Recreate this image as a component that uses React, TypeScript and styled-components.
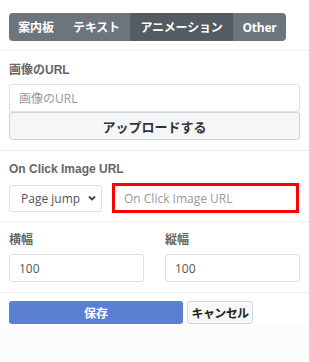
import React from "react";
import styled, { createGlobalStyle } from "styled-components";

const Global = createGlobalStyle`
  html, body { margin: 0; padding: 0; background: #fff; }
  body { font-family: "Open Sans", "Noto Sans CJK JP", sans-serif; }
  * { box-sizing: border-box; }
`;

const Panel = styled.div`
  width: 309px;
  display: flex;
  flex-direction: column;
`;

const Section = styled.div<{ $pt?: number; $pb?: number }>`
  padding: ${(p) => p.$pt ?? 12}px 9px ${(p) => p.$pb ?? 10}px;
  border-bottom: 1px solid #eeeeee;
  display: flex;
  flex-direction: column;
`;

const TabBar = styled.div`
  display: flex;
  align-self: flex-start;
  border-radius: 4px;
  overflow: hidden;
  height: 28px;
  width: 277px;
`;

const Tab = styled.div<{ $active?: boolean; $w: number }>`
  display: flex;
  align-items: center;
  justify-content: center;
  flex: none;
  width: ${(p) => p.$w}px;
  white-space: nowrap;
  background: ${(p) => (p.$active ? "#545b62" : "#6c757d")};
  color: #fff;
  font-weight: 700;
  font-size: 12px;
  letter-spacing: -0.2px;
  font-family: "Open Sans", "Noto Sans CJK JP", sans-serif;
`;

const Label = styled.div`
  font-size: 12px;
  font-weight: 700;
  color: #666;
  line-height: 14px;
  margin-bottom: 7px;
  font-family: "Liberation Sans", "Noto Sans CJK JP", sans-serif;
`;

const Input = styled.input<{ $red?: boolean }>`
  height: ${(p) => (p.$red ? 30 : 28)}px;
  width: 100%;
  border: ${(p) => (p.$red ? "3px solid #ff0000" : "1px solid #dfdfdf")};
  border-radius: ${(p) => (p.$red ? 0 : 3)}px;
  padding: 0 9px;
  font-size: 12px;
  color: #555;
  font-family: "Open Sans", "Noto Sans CJK JP", sans-serif;
  background: #fff;
  outline: none;
  &::placeholder { color: #999; }
`;

const UploadButton = styled.button`
  height: 28px;
  width: 100%;
  border: 1px solid #d4d4d4;
  border-radius: 3px;
  background: #f5f6f8;
  font-size: 13px;
  font-weight: 700;
  color: #333;
  font-family: "Liberation Sans", "Noto Sans CJK JP", sans-serif;
`;

const Row = styled.div`
  display: flex;
  align-items: center;
  gap: 10px;
`;

const SelectBox = styled.div`
  height: 27px;
  width: 93px;
  flex: none;
  white-space: nowrap;
  border: 1px solid #dfdfdf;
  border-radius: 3px;
  display: flex;
  align-items: center;
  justify-content: space-between;
  padding: 0 4px 0 11px;
  font-size: 12px;
  color: #555;
`;

const Columns = styled.div`
  display: grid;
  grid-template-columns: 135px 135px;
  column-gap: 21px;
`;

const Field = styled.div`
  display: flex;
  flex-direction: column;
`;

const Footer = styled.div`
  padding: 8px 9px 36px;
  display: flex;
  gap: 4px;
  background: linear-gradient(#fff 0, #fff 33px, #fbfbfb 33px);
`;

const SaveButton = styled.button`
  width: 174px;
  height: 23px;
  border: none;
  border-radius: 3px;
  background: #5b80d3;
  color: #fff;
  font-weight: 700;
  font-size: 12px;
  font-family: "Liberation Sans", "Noto Sans CJK JP", sans-serif;
`;

const CancelButton = styled.button`
  width: 66px;
  height: 23px;
  padding: 0;
  white-space: nowrap;
  border: 1px solid #d6d6d6;
  border-radius: 3px;
  background: #f8f8f8;
  color: #222;
  font-weight: 700;
  font-size: 12px;
  letter-spacing: -0.6px;
  font-family: "Liberation Sans", "Noto Sans CJK JP", sans-serif;
`;

const Chevron = () => (
  <svg width="10" height="10" viewBox="0 0 10 10">
    <path d="M2 3.5 L5 6.5 L8 3.5" fill="none" stroke="#444" strokeWidth="1.8" />
  </svg>
);

export default function App() {
  return (
    <Panel>
      <Global />
      <Section $pt={13} $pb={9}>
        <TabBar>
          <Tab $w={54}>案内板</Tab>
          <Tab $w={67}>テキスト</Tab>
          <Tab $w={103} $active>アニメーション</Tab>
          <Tab $w={53}>Other</Tab>
        </TabBar>
      </Section>
      <Section $pt={12} $pb={10}>
        <Label>画像のURL</Label>
        <Input placeholder="画像のURL" />
        <UploadButton>アップロードする</UploadButton>
      </Section>
      <Section $pt={11} $pb={8}>
        <Label>On Click Image URL</Label>
        <Row>
          <SelectBox>
            <span>Page jump</span>
            <Chevron />
          </SelectBox>
          <Input $red placeholder="On Click Image URL" style={{ width: 187 }} />
        </Row>
      </Section>
      <Section $pt={11} $pb={10}>
        <Columns>
          <Field>
            <Label>横幅</Label>
            <Input defaultValue="100" />
          </Field>
          <Field>
            <Label>縦幅</Label>
            <Input defaultValue="100" />
          </Field>
        </Columns>
      </Section>
      <Footer>
        <SaveButton>保存</SaveButton>
        <CancelButton>キャンセル</CancelButton>
      </Footer>
    </Panel>
  );
}
